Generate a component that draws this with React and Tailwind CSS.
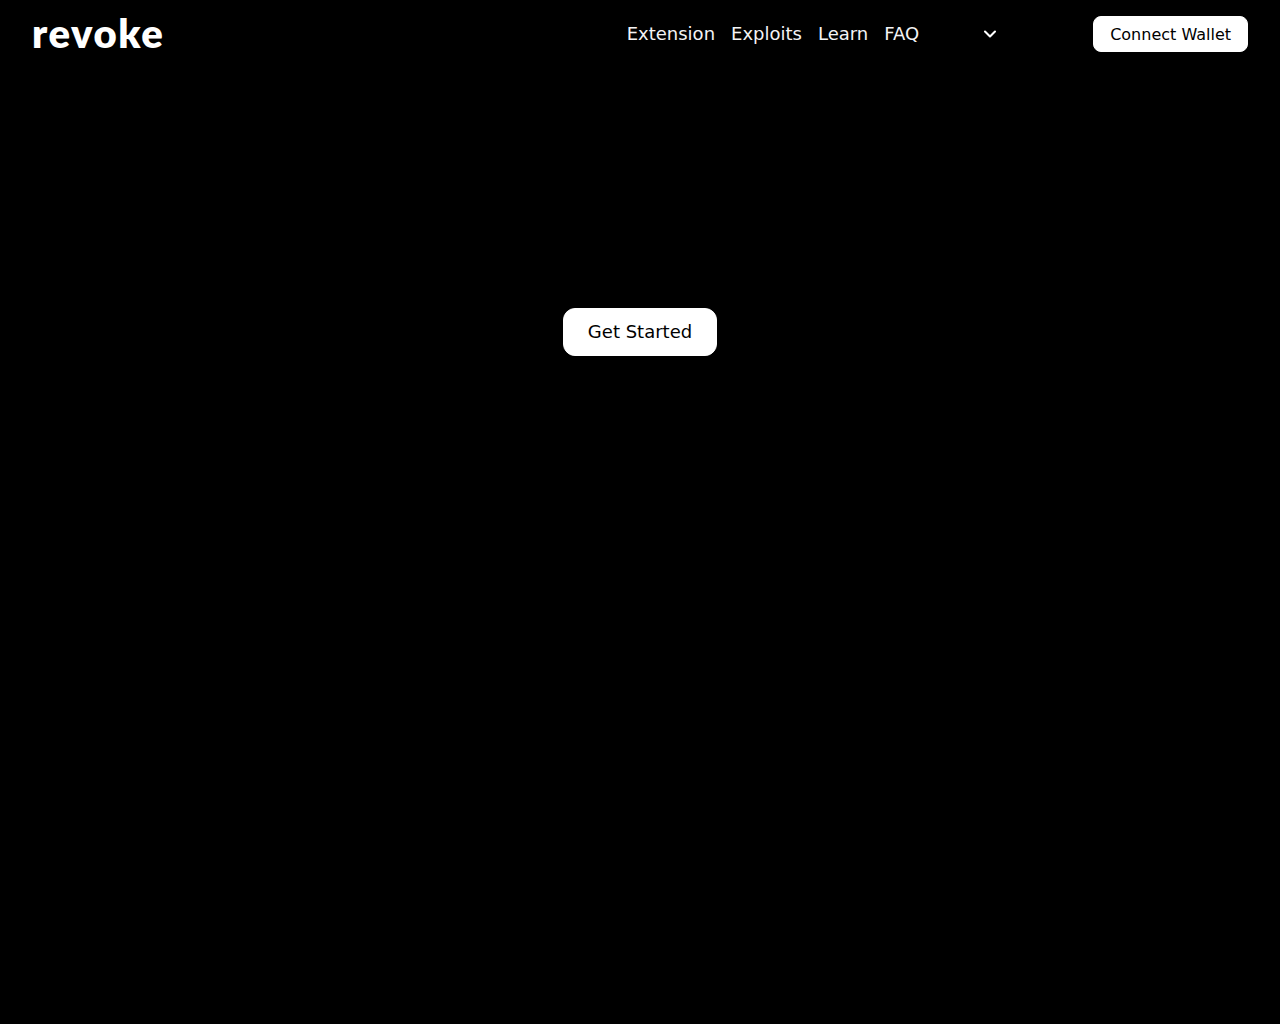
import React from 'react';
import { ChevronDown } from 'lucide-react';

const links = ['Extension', 'Exploits', 'Learn', 'FAQ'];

const App = () => {
    return (
        <div className="min-h-[1024px] bg-black text-white font-['DejaVu_Sans',sans-serif]">
            <header className="flex items-center justify-between h-[68px] px-8">
                <a className="-mt-0.5 font-['Lato',sans-serif] font-extrabold text-[40px] leading-none tracking-[1.6px] text-white">revoke</a>
                <div className="flex items-center">
                    <nav className="flex items-center gap-4 text-lg leading-7">
                        {links.map((link) => (
                            <a key={link} className="text-zinc-100">{link}</a>
                        ))}
                    </nav>
                    <div className="flex items-center justify-end w-[81px]">
                        <ChevronDown size={20} strokeWidth={2.5} />
                    </div>
                    <button className="ml-[93px] h-9 px-4 pt-px bg-white text-black border border-white rounded-lg text-base">Connect Wallet</button>
                </div>
            </header>
            <main className="flex justify-center pt-[240px]">
                <button className="h-12 px-6 bg-white text-black border border-white rounded-xl text-lg">Get Started</button>
            </main>
        </div>
    );
};

export default App;
